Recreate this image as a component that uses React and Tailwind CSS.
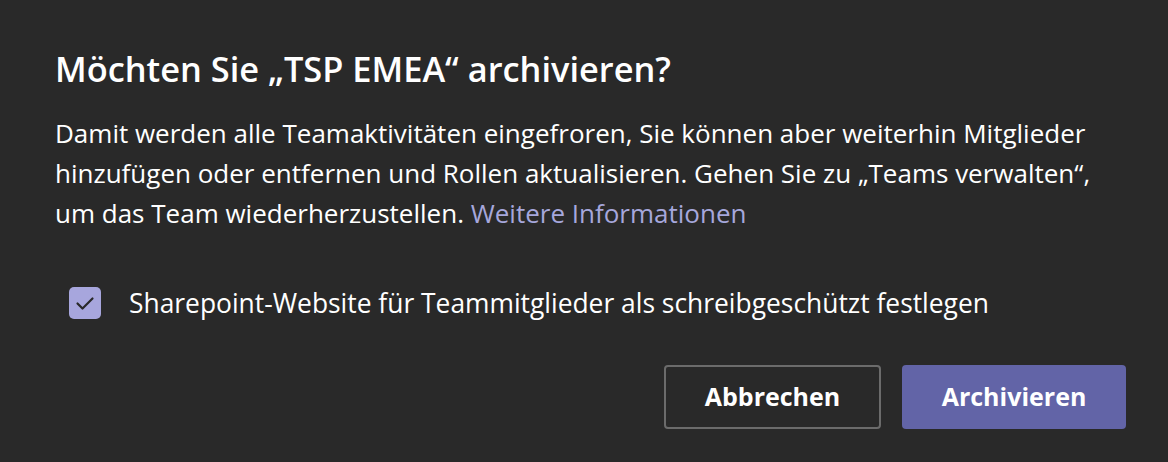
export default function App() {
  const font = { fontFamily: '"Open Sans", "Noto Sans", sans-serif' };
  return (
    <div className="w-[1168px] h-[462px] bg-[#292929] text-white overflow-hidden" style={font}>
      <div className="pl-[55px] pr-[42px] pt-[47px] flex flex-col">
        <h1 className="text-[34.4px] leading-[44px] font-semibold whitespace-nowrap">
          Möchten Sie „TSP EMEA“ archivieren?
        </h1>
        <p className="mt-[22px] text-[26px] leading-[40px] whitespace-nowrap">
          Damit werden alle Teamaktivitäten eingefroren, Sie können aber weiterhin Mitglieder
          <br />
          hinzufügen oder entfernen und Rollen aktualisieren. Gehen Sie zu „Teams verwalten“,
          <br />
          um das Team wiederherzustellen.{" "}
          <span className="text-[#a6a7dc]">Weitere Informationen</span>
        </p>
        <div className="mt-[54px] flex items-center h-[32px] pl-[14px]">
          <div className="w-[32px] h-[32px] rounded-[5px] bg-[#a7a6dd] flex items-center justify-center">
            <svg width="32" height="32" viewBox="0 0 32 32" fill="none">
              <path d="M8.5 16.5L13.5 21.5L23.5 11.5" stroke="#292929" strokeWidth="2.2" strokeLinecap="round" strokeLinejoin="round" />
            </svg>
          </div>
          <span className="ml-[28px] text-[26.4px] leading-[32px] whitespace-nowrap">
            Sharepoint-Website für Teammitglieder als schreibgeschützt festlegen
          </span>
        </div>
        <div className="mt-[46px] flex justify-end gap-[21px]">
          <button className="w-[217px] h-[64px] rounded-[4px] border-2 border-[#6b6b6b] bg-transparent text-[25px] font-bold text-white">
            Abbrechen
          </button>
          <button className="w-[224px] h-[64px] rounded-[4px] bg-[#6264a7] text-[25px] font-bold text-white">
            Archivieren
          </button>
        </div>
      </div>
    </div>
  );
}
